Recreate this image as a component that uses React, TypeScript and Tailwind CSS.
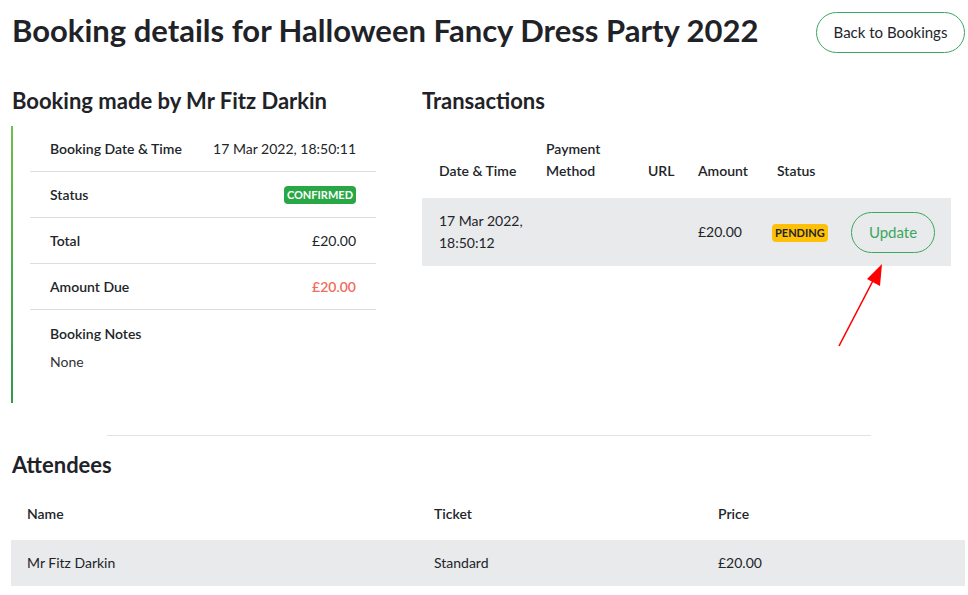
const bookingRows = [
  { label: 'Booking Date & Time', value: '17 Mar 2022, 18:50:11', kind: 'text' },
  { label: 'Status', value: 'CONFIRMED', kind: 'badge' },
  { label: 'Total', value: '£20.00', kind: 'text' },
  { label: 'Amount Due', value: '£20.00', kind: 'due' },
];

function BookingSummary() {
  return (
    <div className="w-[364px] shrink-0">
      <h2 className="text-[22px] font-bold leading-7 text-[#1f2328]">Booking made by Mr Fitz Darkin</h2>
      <div className="mt-[11px] flex">
        <div className="-ml-[1px] w-[2px] shrink-0 bg-[linear-gradient(#6fbf4a,#2d9a4c)]" />
        <div className="flex-1 pl-[17px] pb-[31px]">
          {bookingRows.map((row) => (
            <div
              key={row.label}
              className="flex h-[46px] items-center justify-between border-b border-[#dedede] px-5 text-sm"
            >
              <span className="font-semibold text-[#212529]">{row.label}</span>
              {row.kind === 'badge' ? (
                <span className="flex h-[18px] items-center rounded bg-[#28a745] px-[3px] text-[11px] font-bold text-white">
                  {row.value}
                </span>
              ) : row.kind === 'due' ? (
                <span className="font-semibold text-[#f26b5b]">{row.value}</span>
              ) : (
                <span className="text-[#212529]">{row.value}</span>
              )}
            </div>
          ))}
          <div className="px-5 pt-[14px] text-sm">
            <div className="font-semibold text-[#212529]">Booking Notes</div>
            <div className="mt-[8px] text-[#333]">None</div>
          </div>
        </div>
      </div>
    </div>
  );
}

function Transactions() {
  const cols = 'grid grid-cols-[108px_102px_50px_79px_78px_112px]';
  return (
    <div className="relative ml-[46px] w-[529px]">
      <h2 className="text-[22px] font-bold leading-7 text-[#1f2328]">Transactions</h2>
      <div className={`${cols} mt-[23px] items-end pb-[16px] text-sm font-semibold leading-[22px] text-[#212529]`}>
        <div className="pl-[17px]">Date &amp; Time</div>
        <div className="pl-[16px]">Payment<br />Method</div>
        <div className="pl-[16px]">URL</div>
        <div className="pl-[16px]">Amount</div>
        <div className="pl-[16px]">Status</div>
        <div />
      </div>
      <div className={`${cols} h-[68px] items-center bg-[#e9eaec] text-sm leading-[22px] text-[#212529]`}>
        <div className="pl-[17px]">17 Mar 2022,<br />18:50:12</div>
        <div />
        <div />
        <div className="pl-[16px]">£20.00</div>
        <div className="pl-[11px]">
          <span className="inline-flex h-[18px] items-center rounded bg-[#ffc107] px-[3px] text-[11px] font-bold text-[#212529]">PENDING</span>
        </div>
        <div className="pl-[12px]">
          <button className="h-[41px] w-[84px] rounded-full border border-[#3aa760] text-[15px] text-[#3aa760]">Update</button>
        </div>
      </div>
      <svg className="pointer-events-none absolute left-[405px] top-[174px]" width="60" height="90" viewBox="0 0 60 90">
        <line x1="12" y1="85" x2="50" y2="12" stroke="#ff0000" strokeWidth="1.6" />
        <polygon points="55,3 53,25 40,18" fill="#ff0000" />
      </svg>
    </div>
  );
}

function Attendees() {
  const cols = 'grid grid-cols-[407px_284px_1fr]';
  return (
    <div>
      <h2 className="pl-[12px] text-[22px] font-bold leading-7 text-[#1f2328]">Attendees</h2>
      <div className="ml-[11px] w-[954px]">
        <div className={`${cols} h-[61px] items-center pt-[8px] text-sm font-semibold text-[#212529]`}>
          <div className="pl-[16px]">Name</div>
          <div className="pl-[16px]">Ticket</div>
          <div className="pl-[16px]">Price</div>
        </div>
        <div className={`${cols} h-[46px] items-center bg-[#e9eaec] text-sm text-[#212529]`}>
          <div className="pl-[16px]">Mr Fitz Darkin</div>
          <div className="pl-[16px]">Standard</div>
          <div className="pl-[16px]">£20.00</div>
        </div>
      </div>
    </div>
  );
}

export default function App() {
  return (
    <div className="min-h-[595px] w-[968px] bg-white font-['Lato',sans-serif] text-[#212529]">
      <div className="flex items-start justify-between pl-[12px] pr-[3px] pt-[12px]">
        <h1 className="text-[31px] font-bold leading-[36px] text-[#1f2328]">
          Booking details for Halloween Fancy Dress Party 2022
        </h1>
        <button className="h-[41px] w-[149px] rounded-full border border-[#3aa760] text-[15px] text-[#212529]">
          Back to Bookings
        </button>
      </div>
      <div className="mt-[34px] flex pl-[12px]">
        <BookingSummary />
        <Transactions />
      </div>
      <div className="mx-[107px] mt-[32px] w-[764px] border-t border-[#e3e3e3]" />
      <div className="mt-[15px]">
        <Attendees />
      </div>
    </div>
  );
}
